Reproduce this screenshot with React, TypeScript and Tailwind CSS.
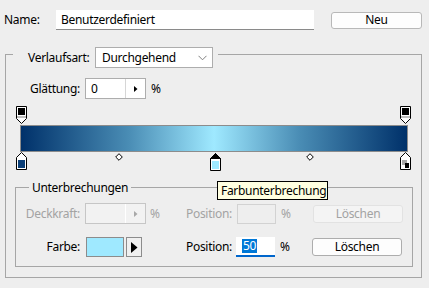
import React from "react";

const FONT = { fontFamily: '"Noto Sans", "Segoe UI", sans-serif' };

function OpacityStop() {
  return (
    <svg width="11" height="18" viewBox="0 0 11 18">
      <path d="M0.5 0.5 H10.5 V12.5 L5.5 17.5 L0.5 12.5 Z" fill="#fff" stroke="#000" />
      <rect x="2" y="2" width="7" height="7" fill="#000" />
      <rect x="1" y="10" width="9" height="2" fill="#bdbdbd" />
    </svg>
  );
}

function ColorStop({ color, selected, fg }: { color?: string; selected?: boolean; fg?: boolean }) {
  return (
    <svg width="11" height="18" viewBox="0 0 11 18">
      <path d="M5.5 0.5 L10.5 5.5 V17.5 H0.5 V5.5 Z" fill="#fff" stroke="#000" />
      {selected && <path d="M5.5 0.5 L10.5 5.5 H0.5 Z" fill="#000" stroke="#000" />}
      {fg ? (
        <>
          <rect x="2" y="8" width="5" height="5" fill="#a8a8a8" />
          <rect x="5" y="11" width="4" height="5" fill="#000" />
        </>
      ) : (
        <rect x="2" y="8" width="7" height="8" fill={color} />
      )}
    </svg>
  );
}

function Diamond() {
  return (
    <svg width="8" height="8" viewBox="0 0 8 8">
      <path d="M4 0.7 L7.3 4 L4 7.3 L0.7 4 Z" fill="#fff" stroke="#000" />
    </svg>
  );
}

function SmallArrow({ color }: { color: string }) {
  return (
    <svg width="4" height="6" viewBox="0 0 4 6">
      <path d="M0 0 L3.5 3 L0 6 Z" fill={color} />
    </svg>
  );
}

function SpinInput({ value, disabled }: { value?: string; disabled?: boolean }) {
  return (
    <div
      className={
        "flex h-[21px] w-[61px] border " +
        (disabled ? "border-[#c6c6c6] bg-[#f2f2f2]" : "border-[#adadad] bg-white")
      }
    >
      <div className="flex w-[39px] items-center pl-[5px]">{value}</div>
      <div className={"w-px " + (disabled ? "bg-white" : "bg-[#d6d6d6]")} />
      <div className="flex flex-1 items-center justify-center">
        <SmallArrow color={disabled ? "#a8a8a8" : "#000"} />
      </div>
    </div>
  );
}

export default function App() {
  return (
    <div
      className="relative h-[288px] w-[429px] overflow-hidden bg-[#eeeeee] text-[12px] leading-none tracking-[-0.3px] text-black"
      style={FONT}
    >
      {/* Name row */}
      <div className="flex items-center pl-[4px] pt-[10px]">
        <div className="w-[52px]">Name:</div>
        <div className="flex h-[20px] w-[258px] items-center border-b border-[#8a8a8a] bg-white pl-[5px]">
          Benutzerdefiniert
        </div>
        <button className="ml-[17px] flex h-[17px] w-[91px] items-center justify-center rounded-[3px] border border-[#b8b8b8] bg-[#fdfdfd]">
          Neu
        </button>
      </div>

      {/* Outer group */}
      <div className="ml-[5px] mt-[24px] w-[417px] border border-[#a6a6a6] pb-[10px]">
        <div className="-mt-[8px] ml-[7px] flex h-[21px] w-fit items-center bg-[#eeeeee] pl-[15px] pr-[5px]">
          <div className="w-[67px]">Verlaufsart:</div>
          <div className="flex h-[21px] w-[118px] items-center justify-between border border-[#adadad] bg-white pl-[6px] pr-[5px]">
            <span>Durchgehend</span>
            <svg width="9" height="6" viewBox="0 0 9 6">
              <path d="M0.5 0.8 L4.5 4.8 L8.5 0.8" fill="none" stroke="#808080" />
            </svg>
          </div>
        </div>

        <div className="mt-[10px] flex items-center pl-[24px]">
          <div className="w-[55px]">Glättung:</div>
          <SpinInput value="0" />
          <div className="ml-[5px]">%</div>
        </div>

        {/* Gradient editor */}
        <div className="relative ml-[8px] mt-[6px] h-[66px] w-[399px] pt-[20px]">
          <div className="absolute left-[2px] top-[1px]">
            <OpacityStop />
          </div>
          <div className="absolute left-[386px] top-[1px]">
            <OpacityStop />
          </div>
          <div className="ml-[6px] h-[27px] w-[388px] border border-[#8c8c8c] bg-[linear-gradient(to_right,#00316a,#4a8db5_28%,#9fe9ff_50%,#4a8db5_72%,#00316a)]" />
          <div className="absolute left-[2px] top-[47px]">
            <ColorStop color="#0a3f78" />
          </div>
          <div className="absolute left-[196px] top-[48px]">
            <ColorStop color="#9fe9ff" selected />
          </div>
          <div className="absolute left-[386px] top-[47px]">
            <ColorStop fg />
          </div>
          <div className="absolute left-[101px] top-[48px]">
            <Diamond />
          </div>
          <div className="absolute left-[292px] top-[48px]">
            <Diamond />
          </div>
        </div>

        {/* Unterbrechungen group */}
        <div className="ml-[9px] mt-[16px] w-[398px] border border-[#a6a6a6] pb-[9px]">
          <div className="-mt-[8px] ml-[13px] flex h-[16px] w-fit items-center bg-[#eeeeee] px-[3px]">
            Unterbrechungen
          </div>

          <div className="mt-[7px] flex items-center text-[#a3a3a3]">
            <div className="w-[64px] text-right">Deckkraft:</div>
            <div className="ml-[5px]">
              <SpinInput disabled />
            </div>
            <div className="ml-[4px] w-[12px]">%</div>
            <div className="w-[70px] text-right">Position:</div>
            <div className="ml-[5px] h-[20px] w-[39px] border border-[#d2d2d2] bg-[#eeeeee]" />
            <div className="ml-[5px] w-[12px]">%</div>
            <div className="ml-[20px] flex h-[18px] w-[90px] items-center justify-center rounded-[3px] border border-[#e2e2e2] bg-[#f4f4f4]">
              Löschen
            </div>
          </div>

          <div className="mt-[13px] flex items-center">
            <div className="w-[64px] text-right">Farbe:</div>
            <div className="ml-[6px] h-[20px] w-[38px] border border-[#8c8c8c] bg-[#9fe9ff]" />
            <div className="ml-[2px] flex h-[20px] w-[16px] items-center justify-center border border-[#8c8c8c] bg-[#f0f0f0]">
              <svg width="7" height="11" viewBox="0 0 7 11">
                <path d="M0 0 L6.5 5.5 L0 11 Z" fill="#000" />
              </svg>
            </div>
            <div className="ml-[20px] w-[70px] text-right">Position:</div>
            <div className="ml-[4px] flex h-[20px] w-[39px] items-center border-b-2 border-[#0066cc] bg-white pl-[6px]">
              <span className="bg-[#0078d7] px-px py-[1px] text-white">50</span>
            </div>
            <div className="ml-[5px] w-[12px]">%</div>
            <button className="ml-[20px] flex h-[18px] w-[90px] items-center justify-center rounded-[3px] border border-[#adadad] bg-[#fdfdfd]">
              Löschen
            </button>
          </div>
        </div>
      </div>

      {/* Tooltip */}
      <div className="absolute left-[217px] top-[181px] flex h-[19px] w-[111px] items-center border border-black bg-[#ffffe1] pl-[3px]">
        Farbunterbrechung
      </div>
    </div>
  );
}
